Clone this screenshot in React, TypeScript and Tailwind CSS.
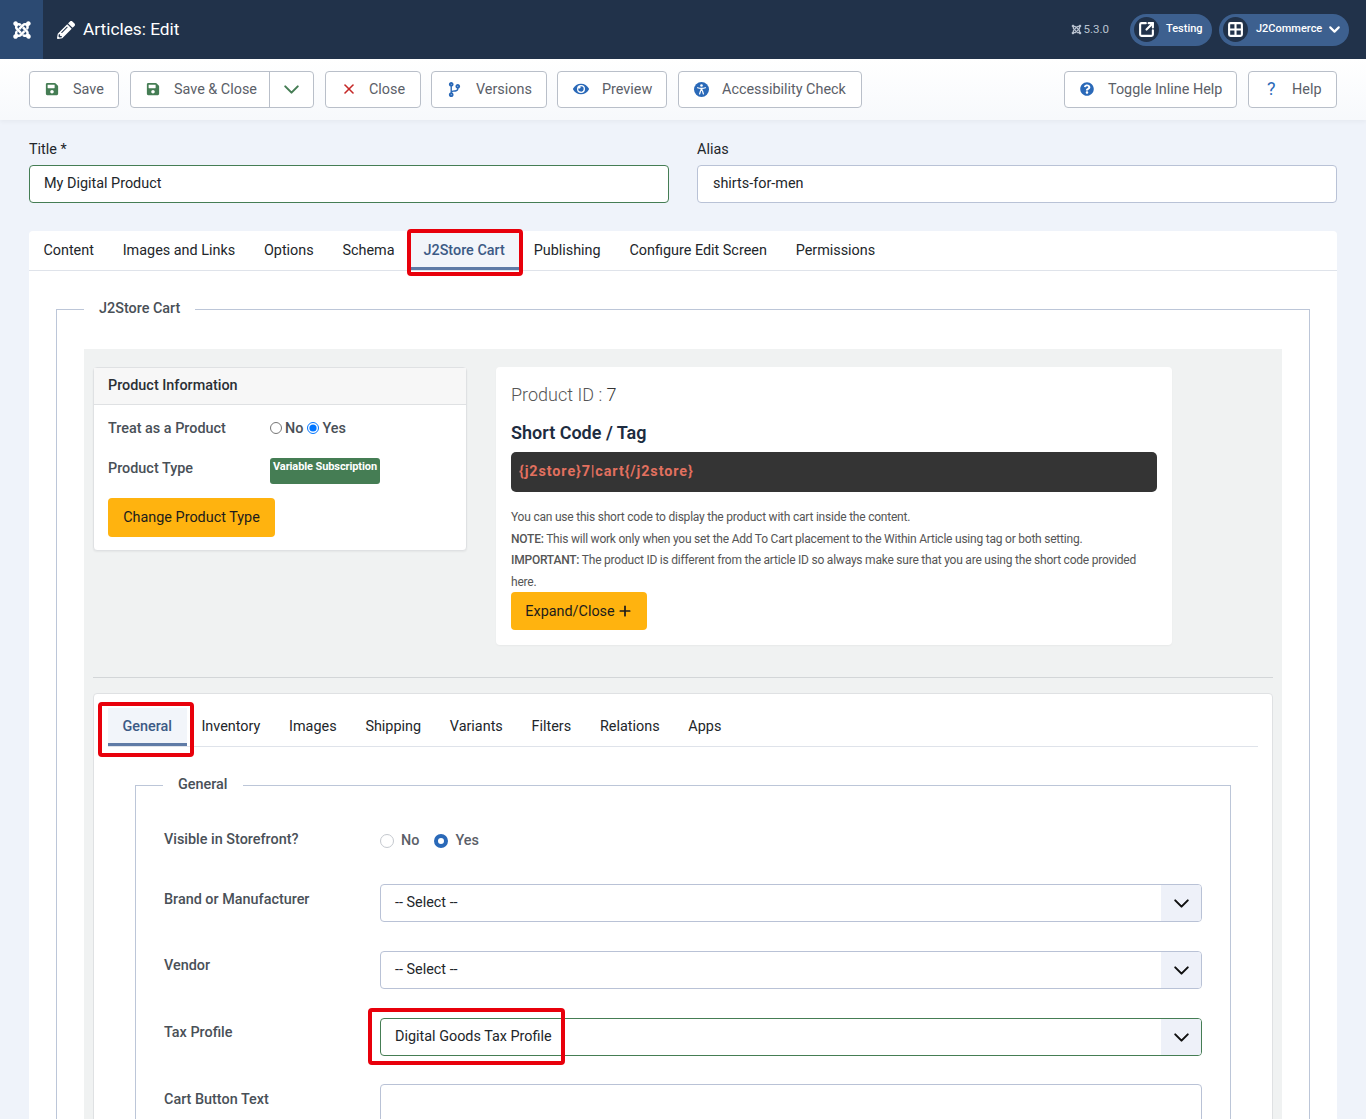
import React from 'react';
import { FaJoomla, FaPencilAlt, FaSave, FaCodeBranch, FaEye, FaQuestionCircle } from 'react-icons/fa';
import { ChevronDown, Plus, X, SquareArrowOutUpRight, Grid2x2 } from 'lucide-react';

function Btn({ icon, label, w, iconCls, gap = 'w-[28px]' }: { icon: React.ReactNode; label: string; w: string; iconCls: string; gap?: string }) {
  return (
    <div className={`${w} h-[37px] flex items-center pl-[15px] bg-white border border-[#b9bfc9] rounded-[4px] text-[14.4px] text-[#5b6068] shrink-0`}>
      <span className={`${gap} flex items-center ${iconCls}`}>{icon}</span>
      <span className="pt-[1px]">{label}</span>
    </div>
  );
}

function Tab({ label, active, cls = '' }: { label: string; active?: boolean; cls?: string }) {
  return (
    <div className={`relative h-full flex items-center text-[14.4px] ${active ? 'px-[14.5px] bg-[#f2f5fa] text-[#3c5a85] font-medium border-b-[3px] border-[#5f7ba6] pt-[3px]' : 'px-[14.4px] text-[#22262a]'} ${cls}`}>
      {label}
    </div>
  );
}

function Select({ text, green }: { text: string; green?: boolean }) {
  return (
    <div className={`flex-1 h-[38px] flex items-center bg-white border rounded-[4px] overflow-hidden ${green ? 'border-[#457d54]' : 'border-[#b9c2d6]'}`}>
      <span className="flex-1 pl-[14px] text-[14.4px] text-[#22262a]">{text}</span>
      <span className="w-[40px] h-full bg-[#eef1f9] flex items-center justify-center text-[#111]">
        <ChevronDown size={25} strokeWidth={2} />
      </span>
    </div>
  );
}

function Row({ label, children, mb, lh }: { label: string; children: React.ReactNode; mb: string; lh: string }) {
  return (
    <div className={`flex items-start ${mb}`}>
      <div className={`w-[216px] shrink-0 text-[14.4px] font-medium text-[#495057] ${lh}`}>{label}</div>
      {children}
    </div>
  );
}

function AccessIcon() {
  return (
    <svg width="15" height="15" viewBox="0 0 15 15">
      <circle cx="7.5" cy="7.5" r="7.5" fill="#2a69b8" />
      <circle cx="7.5" cy="3.5" r="1.3" fill="#fff" />
      <path d="M3.6 5.7 C5 6.3 6 6.4 7.5 6.4 C9 6.4 10 6.3 11.4 5.7" stroke="#fff" strokeWidth="1.2" fill="none" strokeLinecap="round" />
      <path d="M7.5 6.4 V9" stroke="#fff" strokeWidth="2" fill="none" />
      <path d="M6.6 8.8 L5.6 12 M8.4 8.8 L9.4 12" stroke="#fff" strokeWidth="1.2" fill="none" strokeLinecap="round" />
    </svg>
  );
}

export default function App() {
  return (
    <div className="w-[1366px] h-[1119px] overflow-hidden bg-[#eff3fa] font-['Roboto',sans-serif] relative">
      <header className="h-[59px] bg-[#21324a] flex items-center text-white">
        <div className="w-[43px] h-full bg-[#2c4a72] flex items-center justify-center"><FaJoomla size={20} /></div>
        <FaPencilAlt size={18} className="ml-[14px]" />
        <span className="ml-[8px] text-[17.3px]">Articles: Edit</span>
        <div className="ml-auto flex items-center mr-[17px]">
          <FaJoomla size={11} className="text-[#b9c2d0]" />
          <span className="ml-[2px] text-[11.5px] text-[#b9c2d0]">5.3.0</span>
          <div className="ml-[21px] w-[82px] h-[32px] rounded-full bg-[#3d608f] flex items-center pl-[4px]">
            <span className="w-[25px] h-[25px] rounded-full bg-[#21324a] flex items-center justify-center"><SquareArrowOutUpRight size={17} strokeWidth={3} /></span>
            <span className="ml-[7px] text-[11px] font-medium">Testing</span>
          </div>
          <div className="ml-[7px] w-[130px] h-[32px] rounded-full bg-[#3d608f] flex items-center pl-[4px]">
            <span className="w-[25px] h-[25px] rounded-full bg-[#21324a] flex items-center justify-center"><Grid2x2 size={17} strokeWidth={3} /></span>
            <span className="ml-[8px] text-[11px] font-medium">J2Commerce</span>
            <ChevronDown size={17} strokeWidth={3} className="ml-[4px]" />
          </div>
        </div>
      </header>

      <div className="h-[61px] bg-gradient-to-b from-white to-[#f7f9fc] shadow-[0_2px_4px_rgba(0,0,0,0.04)] flex items-center px-[29px] pb-[1px]">
        <Btn w="w-[90px]" icon={<FaSave size={14} />} iconCls="text-[#457d54]" label="Save" />
        <div className="ml-[11px] w-[184px] h-[37px] flex bg-white border border-[#b9bfc9] rounded-[4px] text-[14.4px] text-[#5b6068] shrink-0">
          <div className="w-[139px] flex items-center pl-[15px] border-r border-[#b9bfc9]">
            <span className="w-[28px] flex items-center text-[#457d54]"><FaSave size={14} /></span><span className="pt-[1px]">Save &amp; Close</span>
          </div>
          <div className="flex-1 flex items-center justify-center text-[#457d54]"><ChevronDown size={25} strokeWidth={2} /></div>
        </div>
        <div className="ml-[11px]"><Btn w="w-[96px]" icon={<X size={16} strokeWidth={2.4} />} iconCls="text-[#c52827]" label="Close" /></div>
        <div className="ml-[10px]"><Btn w="w-[116px]" icon={<FaCodeBranch size={15} />} iconCls="text-[#2a69b8]" gap="w-[29px]" label="Versions" /></div>
        <div className="ml-[10px]"><Btn w="w-[110px]" icon={<FaEye size={16} />} iconCls="text-[#2a69b8]" gap="w-[29px]" label="Preview" /></div>
        <div className="ml-[11px]"><Btn w="w-[184px]" icon={<AccessIcon />} iconCls="" label="Accessibility Check" /></div>
        <div className="ml-auto flex gap-[11px]">
          <Btn w="w-[173px]" icon={<FaQuestionCircle size={14} />} iconCls="text-[#2a69b8]" label="Toggle Inline Help" />
          <Btn w="w-[89px]" icon={<span className="text-[18px] leading-none">?</span>} iconCls="text-[#2a69b8] pl-[3px]" label="Help" />
        </div>
      </div>

      <div className="px-[29px]">
        <div className="flex gap-[28px] pt-[21px]">
          <div className="w-[640px]">
            <div className="text-[14.4px] text-[#22262a] leading-[17px] mb-[7px]">Title *</div>
            <div className="h-[38px] border border-[#457d54] rounded-[4px] bg-white flex items-center pl-[14px] text-[14.4px] text-[#22262a]">My Digital Product</div>
          </div>
          <div className="w-[640px]">
            <div className="text-[14.4px] text-[#22262a] leading-[17px] mb-[7px]">Alias</div>
            <div className="h-[38px] border border-[#b9c2d6] rounded-[4px] bg-white flex items-center pl-[15px] text-[14.4px] text-[#22262a]">shirts-for-men</div>
          </div>
        </div>

        <div className="mt-[28px] bg-white rounded-t-[4px]">
          <div className="h-[40px] flex border-b border-[#dfe3ea]">
            <Tab label="Content" />
            <Tab label="Images and Links" />
            <Tab label="Options" />
            <Tab label="Schema" />
            <div className="relative h-full">
              <Tab label="J2Store Cart" active />
              <div className="absolute left-[-2px] right-[-3.6px] top-[-2px] h-[47px] border-[4px] border-[#e8000b] rounded-[4px]" />
            </div>
            <Tab label="Publishing" />
            <Tab label="Configure Edit Screen" />
            <Tab label="Permissions" />
          </div>

          <div className="pt-[28px] px-[27px] pb-[20px]">
            <fieldset className="border border-[#bcc6d8] px-[27px] pb-[40px]">
              <legend className="px-[15px] text-[14.4px] font-medium text-[#495057] leading-[20px]">J2Store Cart</legend>

              <div className="mt-[30px] bg-[#f0f2f2] px-[9px] pt-[18px]">
                <div className="flex items-start gap-[29px]">
                  <div className="w-[374px] h-[184px] bg-white rounded-[4px] border border-[#dfe1e3] shadow-[0_1px_2px_rgba(0,0,0,0.05)]">
                    <div className="h-[37px] bg-[#f7f7f7] border-b border-[#dfe1e3] flex items-center px-[14px] text-[14.4px] font-medium text-[#2a2f35]">Product Information</div>
                    <div className="px-[14px] pt-[15px]">
                      <div className="flex items-center h-[17px] text-[14.4px] font-medium text-[#495057]">
                        <span className="w-[162px]">Treat as a Product</span>
                        <input type="radio" readOnly className="w-[12px] h-[12px] m-0 -translate-y-[1px]" />
                        <span className="ml-[3px]">No</span>
                        <input type="radio" readOnly checked className="w-[12px] h-[12px] m-0 ml-[4px] -translate-y-[1px]" />
                        <span className="ml-[3px]">Yes</span>
                      </div>
                      <div className="flex items-start h-[26px] mt-[21px] text-[14.4px] font-medium text-[#495057]">
                        <span className="w-[162px]">Product Type</span>
                        <span className="w-[110px] h-[26px] bg-[#457d54] rounded-[3px] text-white text-[11px] font-bold pl-[3px] tracking-[-0.1px] leading-[18px]">Variable Subscription</span>
                      </div>
                      <div className="mt-[14px] w-[167px] h-[39px] bg-[#ffb30f] rounded-[4px] flex items-center justify-center text-[14.4px] text-[#1c1c1c]">Change Product Type</div>
                    </div>
                  </div>

                  <div className="w-[676px] h-[278px] bg-white rounded-[4px] px-[15px] pt-[16px] shadow-[0_1px_2px_rgba(0,0,0,0.04)]">
                    <div className="text-[18px] font-light text-[#555] leading-[24px]">Product ID : <span className="text-[#333]">7</span></div>
                    <div className="mt-[14px] text-[18px] font-semibold text-[#1d2c40] leading-[24px]">Short Code / Tag</div>
                    <div className="mt-[7px] h-[40px] bg-[#343434] rounded-[5px] flex items-center pl-[8px] text-[14.4px] font-bold tracking-[0.9px] text-[#e2705f]">{'{j2store}7|cart{/j2store}'}</div>
                    <div className="mt-[15px] text-[12px] leading-[21.6px] text-[#555] tracking-[-0.22px]">
                      <div>You can use this short code to display the product with cart inside the content.</div>
                      <div><b className="font-medium">NOTE:</b> This will work only when you set the Add To Cart placement to the Within Article using tag or both setting.</div>
                      <div><b className="font-medium">IMPORTANT:</b> The product ID is different from the article ID so always make sure that you are using the short code provided here.</div>
                    </div>
                    <div className="mt-[-1px] w-[136px] h-[38px] bg-[#ffb30f] rounded-[4px] flex items-center justify-center text-[14.4px] text-[#1c1c1c]">Expand/Close<Plus size={16} strokeWidth={2.6} className="ml-[2px]" /></div>
                  </div>
                </div>

                <div className="mt-[32px] border-t border-[#d3d6d8]" />

                <div className="mt-[15px] bg-white border border-[#dfe1e3] rounded-t-[4px] pt-[14px] px-[14px] pb-[40px]">
                  <div className="h-[39px] flex border-b border-[#dfe3ea]">
                    <div className="relative h-full">
                      <Tab label="General" active cls="w-[79px]" />
                      <div className="absolute left-[-10px] right-[-7px] top-[-6px] h-[55px] border-[4px] border-[#e8000b] rounded-[4px]" />
                    </div>
                    <Tab label="Inventory" />
                    <Tab label="Images" />
                    <Tab label="Shipping" />
                    <Tab label="Variants" />
                    <Tab label="Filters" />
                    <Tab label="Relations" />
                    <Tab label="Apps" />
                  </div>

                  <fieldset className="mt-[28px] mx-[27px] border border-[#bcc6d8] px-[28px] pt-[34px] pb-[40px]">
                    <legend className="ml-[-1px] px-[15px] text-[14.4px] font-medium text-[#495057] leading-[20px]">General</legend>
                    <Row label="Visible in Storefront?" mb="mb-[33px]" lh="pt-0">
                      <div className="flex items-center h-[20px] text-[14.4px] font-medium text-[#5b6068] mt-[2px]">
                        <span className="w-[14px] h-[14px] rounded-full border border-[#c4c8ce] bg-white" />
                        <span className="ml-[7px]">No</span>
                        <span className="ml-[15px] w-[14px] h-[14px] rounded-full border-[4px] border-[#2a69b8] bg-white" />
                        <span className="ml-[7px]">Yes</span>
                      </div>
                    </Row>
                    <Row label="Brand or Manufacturer" mb="mb-[29px]" lh="pt-[5px]"><Select text="-- Select --" /></Row>
                    <Row label="Vendor" mb="mb-[29px]" lh="pt-[4px]"><Select text="-- Select --" /></Row>
                    <Row label="Tax Profile" mb="mb-[28px]" lh="pt-[4px]">
                      <div className="relative flex-1 flex">
                        <Select text="Digital Goods Tax Profile" green />
                        <div className="absolute left-[-12px] top-[-10px] w-[197px] h-[57px] border-[4px] border-[#e8000b] rounded-[4px]" />
                      </div>
                    </Row>
                    <Row label="Cart Button Text" mb="mb-0" lh="pt-[5px]">
                      <div className="flex-1 h-[80px] border border-[#b9c2d6] rounded-[4px] bg-white" />
                    </Row>
                  </fieldset>
                </div>
              </div>
            </fieldset>
          </div>
        </div>
      </div>
    </div>
  );
}
